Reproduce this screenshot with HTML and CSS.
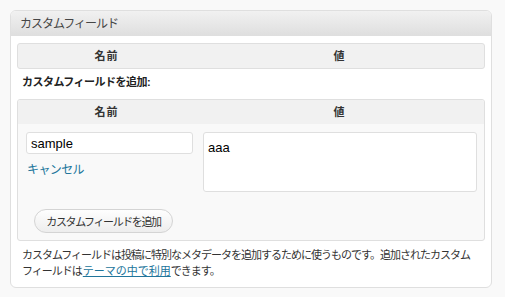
FILE: index.html
```html
<!DOCTYPE html>
<html lang="ja">
<head>
<meta charset="utf-8">
<link rel="stylesheet" href="styles.css">
</head>
<body>
<div class="postbox">
  <div class="box-head">カスタムフィールド</div>
  <div class="inside">
    <div class="list-table">
      <div class="col-left">名前</div>
      <div class="col-right">値</div>
    </div>
    <div class="add-label">カスタムフィールドを追加:</div>
    <div class="new-table">
      <div class="new-head">
        <div class="col-left">名前</div>
        <div class="col-right">値</div>
      </div>
      <div class="new-body">
        <div class="fields">
          <div class="key-cell">
            <input class="key-input" type="text" value="sample">
            <a class="cancel" href="#">キャンセル</a>
          </div>
          <textarea class="value-input">aaa</textarea>
        </div>
        <button class="add-button" type="button">カスタムフィールドを追加</button>
      </div>
    </div>
    <p class="note">カスタムフィールドは投稿に特別なメタデータを追加するために使うものです。追加されたカスタムフィールドは<a href="#">テーマの中で利用</a>できます。</p>
  </div>
</div>
</body>
</html>
```

FILE: styles.css
```css
html, body {
  margin: 0;
  padding: 0;
}
body {
  background: #f9f9f9;
  padding: 10px 13px 10px 10px;
  font-family: "Liberation Sans", "Noto Sans CJK JP", sans-serif;
  color: #333;
}
.postbox {
  width: 480px;
  background: #fff;
  border: 1px solid #dfdfdf;
  border-radius: 6px;
  overflow: hidden;
}
.box-head {
  height: 24px;
  line-height: 26px;
  padding-left: 9px;
  font-size: 12px;
  letter-spacing: -1px;
  color: #464646;
  background: linear-gradient(#f1f1f1, #dfdfdf);
  border-bottom: 1px solid #dfdfdf;
}
.inside {
  padding: 7px 6px 8px 6px;
}
.list-table,
.new-head {
  display: flex;
  font-size: 11px;
  font-weight: bold;
  letter-spacing: 1px;
  color: #333;
}
.list-table {
  height: 24px;
  line-height: 24px;
  background: #f1f1f1;
  border: 1px solid #dfdfdf;
  border-radius: 3px;
}
.col-left {
  width: 38%;
  text-align: center;
}
.col-right {
  flex: 1;
  text-align: center;
}
.add-label {
  height: 26px;
  line-height: 26px;
  margin-bottom: 4px;
  padding-left: 5px;
  font-size: 11px;
  font-weight: bold;
  letter-spacing: -0.5px;
  color: #222;
}
.new-table {
  border: 1px solid #dfdfdf;
  border-radius: 3px;
  background: #f9f9f9;
  overflow: hidden;
}
.new-head {
  height: 24px;
  line-height: 24px;
  background: #f1f1f1;
}
.new-body {
  padding: 8px 7px 7px 8px;
}
.fields {
  display: flex;
  gap: 10px;
}
.key-cell {
  display: flex;
  flex-direction: column;
  width: 167px;
}
.key-input {
  box-sizing: border-box;
  width: 167px;
  height: 22px;
  margin: 0;
  padding: 0 4px;
  border: 1px solid #dfdfdf;
  border-radius: 3px;
  background: #fff;
  font-family: "Liberation Sans", sans-serif;
  font-size: 13px;
  color: #000;
  outline: none;
}
.cancel {
  margin-top: 8px;
  line-height: 16px;
  padding-left: 1px;
  font-size: 12px;
  letter-spacing: -0.6px;
  color: #21759b;
  text-decoration: none;
}
.value-input {
  box-sizing: border-box;
  width: 275px;
  height: 60px;
  margin: 0;
  padding: 7px 4px;
  border: 1px solid #dfdfdf;
  border-radius: 3px;
  background: #fff;
  font-family: "Liberation Sans", sans-serif;
  font-size: 13px;
  line-height: 15px;
  color: #000;
  resize: none;
  outline: none;
}
.add-button {
  display: block;
  box-sizing: border-box;
  height: 24px;
  width: 139px;
  margin: 17px 0 0 8px;
  padding: 0;
  border: 1px solid #d4d4d4;
  border-radius: 12px;
  background: linear-gradient(#fefefe, #ededed);
  font-family: "Liberation Sans", "Noto Sans CJK JP", sans-serif;
  font-size: 11px;
  letter-spacing: -1.4px;
  color: #333;
}
.note {
  margin: 6px 0 0 0;
  padding: 0 6px 0 5px;
  font-size: 11px;
  line-height: 16px;
  letter-spacing: -1px;
  color: #333;
}
.note a {
  margin-left: 1px;
  letter-spacing: 0;
  color: #21759b;
  text-decoration: underline;
}
```
